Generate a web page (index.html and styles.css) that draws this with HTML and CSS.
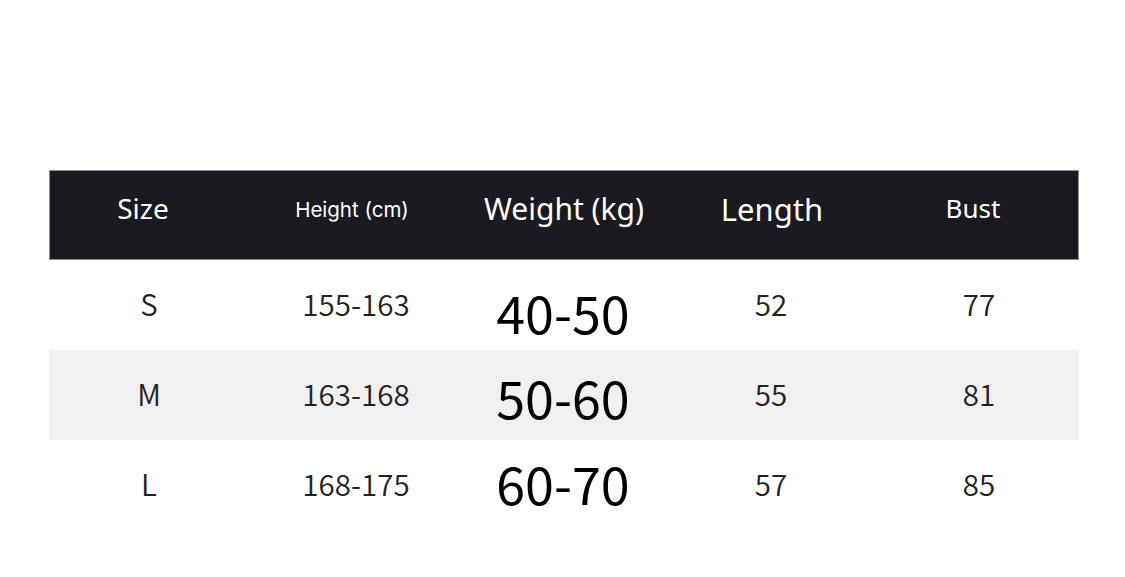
FILE: index.html
```html
<!DOCTYPE html>
<html>
<head>
<meta charset="utf-8">
<link rel="stylesheet" href="styles.css">
</head>
<body>
<div class="table">
  <div class="row head">
    <div class="cell h-size">Size</div>
    <div class="cell h-height">Height (cm)</div>
    <div class="cell h-weight">Weight (kg)</div>
    <div class="cell h-length">Length</div>
    <div class="cell h-bust">Bust</div>
  </div>
  <div class="row r1">
    <div class="cell">S</div>
    <div class="cell">155-163</div>
    <div class="cell big">40-50</div>
    <div class="cell">52</div>
    <div class="cell">77</div>
  </div>
  <div class="row r2 alt">
    <div class="cell">M</div>
    <div class="cell">163-168</div>
    <div class="cell big">50-60</div>
    <div class="cell">55</div>
    <div class="cell">81</div>
  </div>
  <div class="row r3">
    <div class="cell">L</div>
    <div class="cell">168-175</div>
    <div class="cell big">60-70</div>
    <div class="cell">57</div>
    <div class="cell">85</div>
  </div>
</div>
</body>
</html>
```

FILE: styles.css
```css
html, body {
  margin: 0;
  padding: 0;
  background: #ffffff;
}
body {
  width: 1125px;
  height: 577px;
  overflow: hidden;
}
.table {
  width: 1030px;
  margin: 170px 0 0 49px;
  font-family: "Noto Sans CJK SC", "Noto Sans", sans-serif;
  color: #222222;
}
.row {
  display: grid;
  grid-template-columns: 200px 214px 200px 216px 200px;
  height: 90px;
  align-items: center;
}
.row.alt {
  background: #f0f0f0;
}
.cell {
  text-align: center;
  font-size: 29.5px;
  font-weight: 350;
  line-height: 1;
  padding-bottom: 2px;
}
.head {
  background: #1b1a21;
  border: 1px solid #8c8c8c;
  box-sizing: border-box;
  color: #ffffff;
  padding-bottom: 14px;
}
.head .cell {
  font-family: "Noto Sans", sans-serif;
  font-weight: 400;
  padding-bottom: 0;
}
.head .h-size {
  font-size: 28px;
  padding-right: 14px;
}
.head .h-height {
  font-family: "Inter", "Liberation Sans", sans-serif;
  font-size: 20.5px;
  padding-top: 4px;
  padding-right: 10px;
}
.head .h-weight {
  font-size: 30px;
  padding-top: 2px;
}
.head .h-length {
  font-size: 31px;
  padding-top: 2px;
}
.head .h-bust {
  font-size: 26px;
  padding-right: 14px;
}
.row .big {
  font-size: 52px;
  font-weight: 400;
  color: #000;
}
.r1 .big {
  padding-top: 14px;
  padding-bottom: 0;
}
.r2 .big {
  padding-top: 4px;
  padding-bottom: 0;
}
.r3 .big {
  padding-top: 0;
  padding-bottom: 4px;
}
```
